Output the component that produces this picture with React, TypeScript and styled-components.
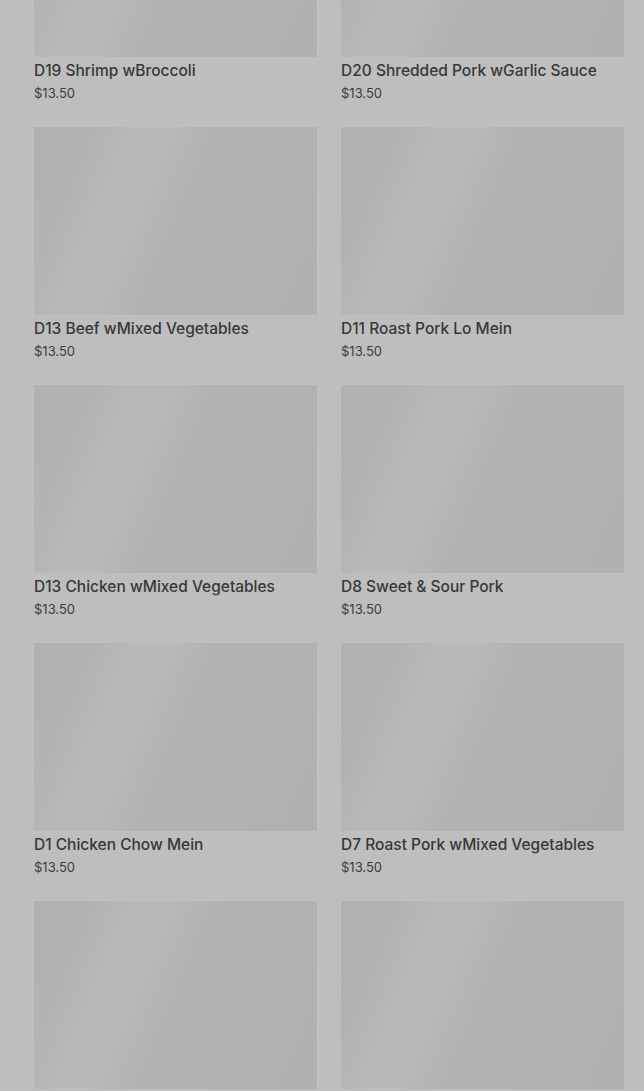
import React from "react";
import styled, { createGlobalStyle } from "styled-components";

const Global = createGlobalStyle`
  html, body { margin: 0; padding: 0; background: #bebebe; }
  body { font-family: Inter, "Noto Sans", sans-serif; overflow: hidden; }
`;

const Page = styled.main`
  padding: 0 20px 0 34px;
  margin-top: -131px;
`;

const Grid = styled.div`
  display: grid;
  grid-template-columns: repeat(2, 283px);
  column-gap: 24px;
  row-gap: 23px;
`;

const Card = styled.article`
  display: flex;
  flex-direction: column;
`;

const Thumb = styled.div`
  height: 188px;
  background: linear-gradient(113deg, #b1b1b1 0%, #b3b3b3 18%, #b9b9b9 28%, #b9b9b9 38%, #b3b3b3 48%, #b0b0b0 100%);
  box-shadow: 0 0 1px rgba(255, 255, 255, 0.25);
`;

const Title = styled.h3`
  margin: 3px 0 0;
  font-size: 15.5px;
  line-height: 22px;
  font-weight: 500;
  color: #383838;
  white-space: nowrap;
`;

const Price = styled.span`
  font-size: 13px;
  line-height: 22px;
  color: #3d3d3d;
`;

const items: (string | null)[] = [
  "D19 Shrimp wBroccoli",
  "D20 Shredded Pork wGarlic Sauce",
  "D13 Beef wMixed Vegetables",
  "D11 Roast Pork Lo Mein",
  "D13 Chicken wMixed Vegetables",
  "D8 Sweet & Sour Pork",
  "D1 Chicken Chow Mein",
  "D7 Roast Pork wMixed Vegetables",
  null,
  null,
];

export default function App() {
  return (
    <>
      <Global />
      <Page>
        <Grid>
          {items.map((name, i) => (
            <Card key={i}>
              <Thumb />
              {name && (
                <>
                  <Title>{name}</Title>
                  <Price>$13.50</Price>
                </>
              )}
            </Card>
          ))}
        </Grid>
      </Page>
    </>
  );
}
